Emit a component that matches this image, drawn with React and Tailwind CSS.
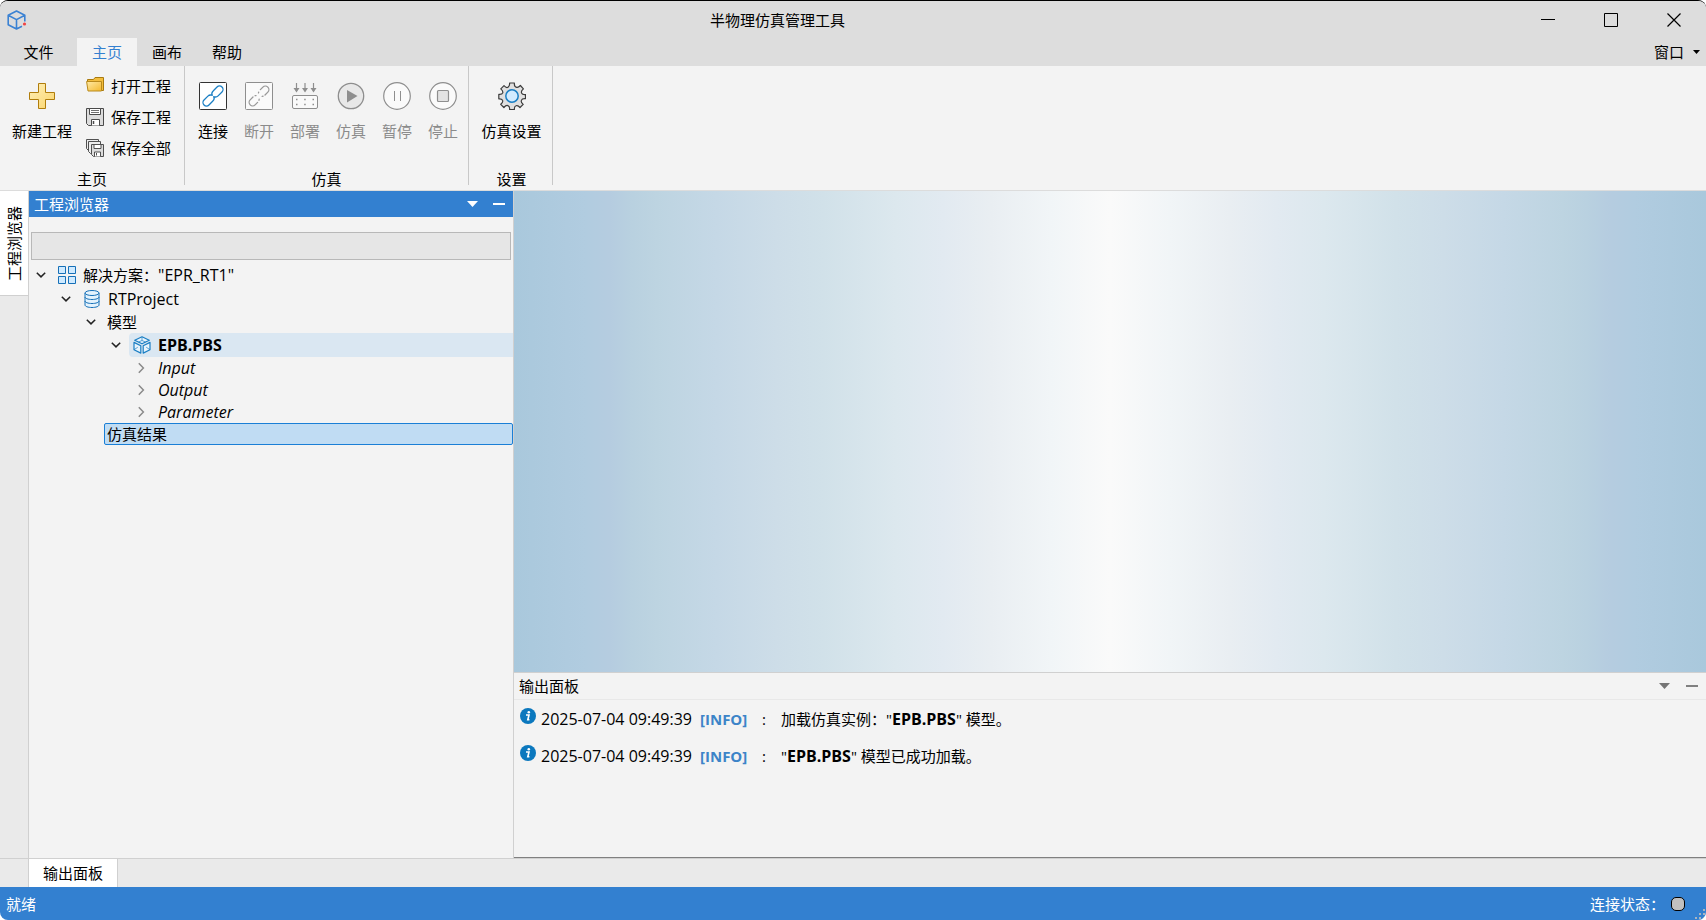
import React from "react";

const Chevron = ({ open }) => (
  <svg className={open ? "size-3 text-[#222]" : "size-3 text-[#8a8a8a]"} viewBox="0 0 12 12" fill="none" stroke="currentColor" strokeWidth="1.5">
    <path d={open ? "M1.8 3.8 6 7.900l4.200-4.100" : "M3.8 1.2 8.4 6l-4.6 4.8"} />
  </svg>
);

const AppLogo = () => (
  <svg className="size-5" viewBox="0 0 20 20" fill="none" stroke="#3b82d3" strokeWidth="1.6" strokeLinejoin="round">
    <path d="M17.8 11.5V5.200L9.500 1 1.200 5.200v9.600L9.500 19l5.500-2.800M1.200 5.200 9.500 9.600l8.300-4.400M9.500 9.600V19" />
    <circle cx="17.500" cy="14" r="1.600" fill="#f04444" stroke="none" />
  </svg>
);

const PlusIcon = () => (
  <svg className="size-7" viewBox="0 0 28 28">
    <defs>
      <linearGradient id="plus" x1="0" y1="0" x2="1" y2="1">
        <stop offset="0" stopColor="#fff0b8" />
        <stop offset="1" stopColor="#fad46c" />
      </linearGradient>
    </defs>
    <path d="M10.500 1.500h7v9h9v7h-9v9h-7v-9h-9v-7h9z" fill="url(#plus)" stroke="#b07d0c" />
  </svg>
);

const FolderIcon = () => (
  <svg className="size-[18px]" viewBox="0 0 18 18">
    <defs>
      <linearGradient id="folder" x1="0" y1="0" x2="1" y2="1">
        <stop offset="0" stopColor="#ffeaa6" />
        <stop offset="1" stopColor="#f4b92e" />
      </linearGradient>
    </defs>
    <path d="M1.500 5V2.500h6l1.500-2h8.500v13h-2z" fill="#f3bd3c" stroke="#a87a10" />
    <path d="M.6 4.500h14.900v9.500H2z" fill="url(#folder)" stroke="#b98a1c" />
  </svg>
);

const SaveIcon = () => (
  <svg className="size-[18px]" viewBox="0 0 18 18" fill="none" stroke="#4a4a4a">
    <path d="M.5.5h17v17h-15l-2-2z" fill="#dcdcdc" />
    <path d="M3.500.5h11v6h-11z" fill="#fff" />
    <path d="M5 2.500h8M5 4.500h8" strokeWidth=".8" />
    <path d="M5.500 17.500v-6h8v6" fill="#fff" />
    <path d="M7.500 13v3" strokeWidth="1.500" />
  </svg>
);

const SaveAllIcon = () => (
  <svg className="size-[18px]" viewBox="0 0 18 18" stroke="#505050">
    <path d="M.5.5h12v11h-10l-2-2z" fill="#ececec" />
    <path d="M2.500 2.500h12v12h-10l-2-2z" fill="#ececec" />
    <path d="M5.500 5.500h12v12h-10l-2-2z" fill="#dcdcdc" />
    <path d="M8 5.500h7v4H8z" fill="#fff" />
    <path d="M8.500 17.500v-4.500h6v4.500" fill="#fff" />
    <path d="M10.500 14v2.500" />
  </svg>
);

const LinkIcon = ({ broken }) => (
  <svg className="size-7" viewBox="0 0 28 28" fill="none">
    <rect x=".5" y=".5" width="27" height="27" rx="1" fill={broken ? "#fafafa" : "#fff"} stroke={broken ? "#8e8e8e" : "#333"} />
    <g stroke={broken ? "#999" : "#1b7fc4"} strokeWidth="1.300" strokeLinecap="round" transform="rotate(-45 14 14)">
      {broken ? (
        <path d="M9 10.500H5a3.500 3.500 0 0 0 0 7h3.500M19.500 10.500H23a3.500 3.500 0 0 1 0 7h-4M11.500 11l.7.600M11 17l.8-.6M15.800 11.500l.7-.5M16 16.500l.7.500" />
      ) : (
        <path d="M13.500 12.200a3.800 3.800 0 0 0-3.200-1.700H4.800a3.500 3.500 0 0 0 0 7h5.500a3.800 3.800 0 0 0 3.800-2.500M14.500 15.800a3.800 3.800 0 0 0 3.200 1.700h5.500a3.500 3.500 0 0 0 0-7h-5.500a3.800 3.800 0 0 0-3.800 2.500" />
      )}
    </g>
  </svg>
);

const DeployIcon = () => (
  <svg className="size-7" viewBox="0 0 28 28" fill="none" stroke="#8e8e8e">
    <path d="M5.500 1v8M14 1v8M22.500 1v8" strokeWidth="1.200" />
    <path d="M2.500 6h6l-3 4.500zM11 6h6l-3 4.500zM19.500 6h6l-3 4.500z" fill="#8e8e8e" stroke="none" />
    <rect x="1.500" y="13.500" width="25" height="13" rx="1.500" fill="#fafafa" />
    <path d="M5 17.500h1.500M13.200 17.500h1.500M21.500 17.500H23M5 22.500h1.500M13.200 22.500h1.500M21.500 22.500H23" strokeWidth="1.500" />
  </svg>
);

const PlayIcon = () => (
  <svg className="size-7" viewBox="0 0 28 28">
    <circle cx="14" cy="14" r="12.700" fill="#e8e8e8" stroke="#8e8e8e" strokeWidth="1.300" />
    <path d="M10 8v12.500L20.500 14z" fill="#8e8e8e" />
  </svg>
);

const PauseIcon = () => (
  <svg className="size-7" viewBox="0 0 28 28" stroke="#8e8e8e" strokeWidth="1.200">
    <circle cx="14" cy="14" r="13.300" fill="#fafafa" />
    <path d="M11.500 9v10M17.500 9v10" strokeWidth="1" />
  </svg>
);

const StopIcon = () => (
  <svg className="size-7" viewBox="0 0 28 28" stroke="#8e8e8e" strokeWidth="1.200">
    <circle cx="14" cy="14" r="13.300" fill="#fafafa" />
    <rect x="8.500" y="8.500" width="11" height="11" rx="1" fill="#e2e2e2" />
  </svg>
);

const GearIcon = () => (
  <svg className="size-7" viewBox="0 0 28 28">
    <path
      d="M11.6 1h4.800q-.4 4 2.300 4.400 1.600.4 3.700-1.900l3 3.400q-2.800 2.300-1.700 4.300.7 1.600 3.800 1.300v4.200q-3.500-.3-4.100 1.700-.8 1.700 1.800 4l-3.200 3.100q-2.200-2.600-4-1.700-1.900.6-1.600 3.700h-4.800q.3-3.300-1.800-3.900-1.700-.7-3.900 1.900l-3.200-3.200q2.700-2.200 1.800-4-.7-1.700-3.700-1.500v-4.400q3.300.3 3.900-1.500.7-1.700-1.900-4l3.200-3.200q2.200 2.500 3.900 1.600 2-.9 1.700-4.300z"
      fill="#e0e0e0"
      stroke="#3c3c3c"
      strokeWidth="1.200"
      strokeLinejoin="round"
    />
    <circle cx="14" cy="14" r="6.200" fill="#d2ebff" stroke="#1b7fc4" strokeWidth="1.500" />
  </svg>
);

const SolutionIcon = () => (
  <svg className="size-[18px]" viewBox="0 0 18 18" fill="#cfeaff" stroke="#1670b8">
    <path d="M.5.5h7v7h-7zM10.500.5h7v7h-7zM.5 10.500h7v7h-7zM10.500 10.500h7v7h-7z" />
  </svg>
);

const DatabaseIcon = () => (
  <svg className="size-[18px]" viewBox="0 0 18 18" fill="#e4f3fd" stroke="#1670b8">
    <path d="M2 3v12c0 1.400 3 2.500 7 2.500s7-1.100 7-2.500V3" />
    <ellipse cx="9" cy="3" rx="7" ry="2.500" />
    <path d="M2 7c0 1.400 3 2.500 7 2.500S16 8.400 16 7M2 11c0 1.400 3 2.500 7 2.500s7-1.100 7-2.500" fill="none" />
  </svg>
);

const ModelIcon = () => (
  <svg className="size-[18px]" viewBox="0 0 18 18" fill="none" stroke="#1b7fc4" strokeWidth="1.200" strokeLinejoin="round">
    <path d="M9 .8 16.300 4.300 9 7.800 1.700 4.300zM7.800 9.800v7.300L1 13.700V6.400zM10.200 9.800v7.300l6.800-3.400V6.400z" fill="#e8f4fc" />
    <path d="M9 1v3.500M9 4.500 5.500 6M9 4.500 12.500 6M1 13.700l3.800-2.500M17 13.700l-3.800-2.500" strokeWidth=".7" />
  </svg>
);

const InfoIcon = () => (
  <svg className="size-4 shrink-0" viewBox="0 0 16 16">
    <circle cx="8" cy="8" r="8" fill="#0b78be" />
    <circle cx="8.800" cy="4.200" r="1.300" fill="#fff" />
    <path d="M6 7h3l-1.200 4.800h1.600" fill="none" stroke="#fff" strokeWidth="1.600" />
  </svg>
);

const Caret = () => (
  <svg className="h-[6px] w-[11px]" viewBox="0 0 11 6" fill="currentColor">
    <path d="M0 0h11L5.500 6z" />
  </svg>
);

const MenuTab = ({ children, active }) => (
  <button className={active ? "h-7 w-15 bg-[#f3f3f3] text-[#3380d0]" : "h-7 w-15"}>{children}</button>
);

const BigTool = ({ icon, label, disabled }) => (
  <button disabled={disabled} className="flex w-[46px] flex-col items-center gap-[11px] whitespace-nowrap pt-2 disabled:text-[#8b8b8b]">
    {icon}
    <span>{label}</span>
  </button>
);

const SmallTool = ({ icon, label }) => (
  <button className="flex h-[31px] items-center gap-[7px]">
    {icon}
    <span>{label}</span>
  </button>
);

const Group = ({ title, className, children }) => (
  <section className={"flex h-[119px] flex-col justify-between border-r border-[#c8c8c8] " + className}>
    <div className="flex">{children}</div>
    <h2 className="text-center leading-3">{title}</h2>
  </section>
);

const LogLine = ({ children }) => (
  <li className="flex h-[37px] items-start gap-[5px]">
    <InfoIcon />
    <p className="flex whitespace-pre pt-px">
      <time className="w-[159px] text-base leading-5">2025-07-04 09:49:39</time>
      <b className="w-[62px] text-[15px] font-bold leading-5 text-[#3c84c8]">[INFO]</b>
      <span className="w-[19px]">:</span>
      <span>{children}</span>
    </p>
  </li>
);

const ModelName = () => <b className="text-base leading-5">EPB.PBS</b>;

export default function App() {
  return (
    <div className="flex h-screen flex-col overflow-hidden rounded-lg border-t border-black bg-[#f3f3f3] font-['Open_Sans','Noto_Sans_CJK_SC',sans-serif] text-[15px] leading-5 text-black">
      <header className="bg-[#dddddd]">
        <div className="flex h-[37px] items-center pl-[7px]">
          <AppLogo />
          <h1 className="ml-3 flex-1 text-center">半物理仿真管理工具</h1>
          <div className="flex pr-px">
            <button aria-label="最小化" className="flex h-9 w-[63px] items-center justify-center">
              <svg className="size-[14px]" viewBox="0 0 14 14" stroke="#000"><path d="M0 6.500h14" /></svg>
            </button>
            <button aria-label="最大化" className="flex h-9 w-[63px] items-center justify-center">
              <svg className="size-[14px]" viewBox="0 0 14 14" fill="none" stroke="#000"><path d="M.5.5h13v13H.5z" /></svg>
            </button>
            <button aria-label="关闭" className="flex h-9 w-[63px] items-center justify-center">
              <svg className="size-[14px]" viewBox="0 0 14 14" stroke="#000" strokeWidth="1.200"><path d="m.5.5 13 13m0-13-13 13" /></svg>
            </button>
          </div>
        </div>
        <nav className="flex h-7 items-center">
          <button className="h-7 w-[77px]">文件</button>
          <MenuTab active>主页</MenuTab>
          <MenuTab>画布</MenuTab>
          <MenuTab>帮助</MenuTab>
          <button className="ml-auto flex items-center gap-[9px] pr-[6px]">
            窗口
            <svg className="h-1 w-[7px]" viewBox="0 0 7 4"><path d="M0 0h7L3.500 4z" /></svg>
          </button>
        </nav>
      </header>

      <div className="flex h-[125px] shrink-0 items-start border-b border-[#dcdcdc]">
        <Group title="主页" className="w-[185px]">
          <button className="flex w-[84px] flex-col items-center gap-[11px] pt-4">
            <PlusIcon />
            <span>新建工程</span>
          </button>
          <div className="flex flex-col pl-0.5 pt-1">
            <SmallTool icon={<FolderIcon />} label="打开工程" />
            <SmallTool icon={<SaveIcon />} label="保存工程" />
            <SmallTool icon={<SaveAllIcon />} label="保存全部" />
          </div>
        </Group>
        <Group title="仿真" className="w-[284px] px-[5px] pt-2">
          <div className="flex shrink-0">
            <BigTool icon={<LinkIcon />} label="连接" />
            <BigTool disabled icon={<LinkIcon broken />} label="断开" />
            <BigTool disabled icon={<DeployIcon />} label="部署" />
            <BigTool disabled icon={<PlayIcon />} label="仿真" />
            <BigTool disabled icon={<PauseIcon />} label="暂停" />
            <BigTool disabled icon={<StopIcon />} label="停止" />
          </div>
        </Group>
        <Group title="设置" className="w-[84px] items-center pl-0.5 pt-2">
          <BigTool icon={<GearIcon />} label="仿真设置" />
        </Group>
      </div>

      <main className="flex min-h-0 flex-1">
        <aside className="w-[29px] shrink-0 border-r border-[#d0d0d0] bg-[#eaeaea]">
          <button className="flex h-[105px] w-7 items-center justify-center border-b border-[#d0d0d0] bg-white pt-0.5">
            <span className="rotate-180 [writing-mode:vertical-rl] [text-orientation:sideways]">工程浏览器</span>
          </button>
        </aside>

        <section className="flex w-[485px] shrink-0 flex-col border-r border-[#d0d0d0]">
          <div className="flex h-[26px] items-center bg-[#3380d0] pl-[5px] pr-2 text-white">
            <h2 className="flex-1">工程浏览器</h2>
            <button aria-label="选项" className="mr-[15px]"><Caret /></button>
            <button aria-label="隐藏" className="h-0.5 w-3 bg-white" />
          </div>
          <div className="px-0.5 pt-[15px]">
            <input aria-label="搜索" className="block h-7 w-full border border-[#b8b8b8] bg-[#e6e6e6] px-2 outline-none" />
          </div>
          <ul role="tree" className="pt-[3px]">
            <li role="treeitem" className="flex h-6 items-center pl-[6px]">
              <Chevron open />
              <span className="ml-[11px] mr-[7px]"><SolutionIcon /></span>
              解决方案：<span className="text-base leading-5">"EPR_RT1"</span>
            </li>
            <li role="treeitem" className="flex h-6 items-center pl-[31px] text-base leading-5">
              <Chevron open />
              <span className="ml-[11px] mr-[7px]"><DatabaseIcon /></span>
              RTProject
            </li>
            <li role="treeitem" className="flex h-[22px] items-center pl-[56px]">
              <Chevron open />
              <span className="ml-[10px]">模型</span>
            </li>
            <li role="treeitem" className="flex h-6 items-center pl-[81px]">
              <Chevron open />
              <span className="ml-[7px] flex h-6 flex-1 items-center gap-[7px] rounded-l-sm bg-[#dae7f2] pl-1">
                <ModelIcon />
                <ModelName />
              </span>
            </li>
            {["Input", "Output", "Parameter"].map((name) => (
              <li key={name} role="treeitem" className="flex h-[22px] items-center pl-[106px] text-base italic leading-5">
                <Chevron />
                <span className="ml-[11px]">{name}</span>
              </li>
            ))}
            <li role="treeitem" aria-selected="true" className="ml-[75px] flex h-[22px] items-center rounded-xs border border-[#1a7fd6] bg-[#c0dcf3] pl-0.5">
              仿真结果
            </li>
          </ul>
        </section>

        <div className="flex min-w-0 flex-1 flex-col">
          <div className="flex-1 bg-[linear-gradient(90deg,#a9c8dc_0%,#b1cce0_6%,#b5cce0_8%,#b9d1e0_10%,#bdd4e1_12%,#c5d8e6_17%,#cddde8_22%,#d1e1e9_26%,#dce8ee_32%,#e2eaf1_36%,#e9eef2_40%,#f1f5f7_45%,#fafafa_50%,#f1f5f7_55%,#e9eef2_60%,#e2eaf1_64%,#dce8ee_68%,#d1e1e9_74%,#cddde8_78%,#c5d8e6_83%,#bdd4e1_88%,#b9d1e0_90%,#b5cce0_92%,#b1cce0_94%,#a9c8dc_100%)]" />
          <section className="flex h-[186px] shrink-0 flex-col border-b border-t border-b-[#808080] border-t-[#d0d0d0]">
            <div className="flex h-[27px] items-center border-b border-[#e8e8e8] pl-[5px] pr-2">
              <h2 className="flex-1">输出面板</h2>
              <button aria-label="选项" className="mr-4 text-[#757575]"><Caret /></button>
              <button aria-label="隐藏" className="h-0.5 w-3 bg-[#808080]" />
            </div>
            <ul className="pl-[6px] pt-2">
              <LogLine>加载仿真实例："<ModelName />" 模型。</LogLine>
              <LogLine>"<ModelName />" 模型已成功加载。</LogLine>
            </ul>
          </section>
        </div>
      </main>

      <div className="flex h-[29px] shrink-0 border-t border-[#d0d0d0] bg-[#eaeaea] pl-7">
        <button className="w-[90px] border-x border-[#d0d0d0] bg-white">输出面板</button>
      </div>

      <footer className="flex h-[33px] shrink-0 items-center bg-[#3380d0] pl-[6px] text-white">
        <span className="flex-1">就绪</span>
        <span>连接状态：</span>
        <span className="ml-[6px] size-[14px] rounded-[5px] border border-black bg-[#c0c0c0]" />
        <svg className="ml-[9px] size-3 self-end" viewBox="0 0 12 12" fill="#a9b4c0">
          <path d="M9 1h2v2H9zM5 5h2v2H5zM9 5h2v2H9zM1 9h2v2H1zM5 9h2v2H5zM9 9h2v2H9z" />
        </svg>
      </footer>
    </div>
  );
}
